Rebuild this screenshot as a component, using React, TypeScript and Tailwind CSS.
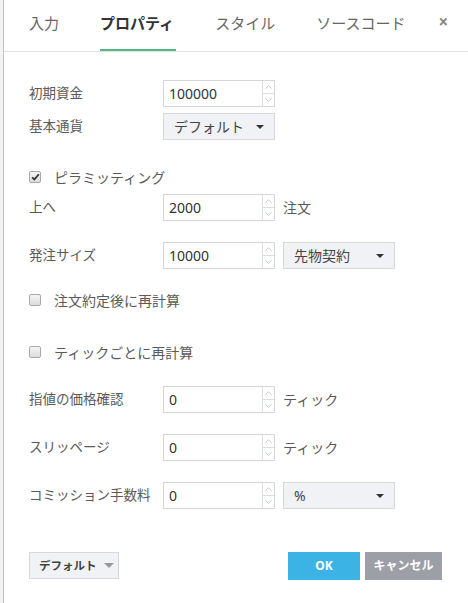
import React from "react";

const font = { fontFamily: "'Noto Sans','Noto Sans CJK JP',sans-serif" };

function Spin() {
  return (
    <div className="flex w-[12px] flex-col border-l border-[#dedede]">
      <div className="flex flex-1 items-center justify-center border-b border-[#dedede]">
        <svg width="7" height="4" viewBox="0 0 7 4"><path d="M0.5 3.5 L3.5 0.8 L6.5 3.5" fill="none" stroke="#b8c2cf" strokeWidth="0.9" /></svg>
      </div>
      <div className="flex flex-1 items-center justify-center">
        <svg width="7" height="4" viewBox="0 0 7 4"><path d="M0.5 0.5 L3.5 3.2 L6.5 0.5" fill="none" stroke="#b8c2cf" strokeWidth="0.9" /></svg>
      </div>
    </div>
  );
}

function NumInput({ value }: { value: string }) {
  return (
    <div className="flex h-[27px] w-[112px] border border-[#d6d6d6] bg-white">
      <div className="flex flex-1 items-center pl-[5px] text-[14px] text-[#333]">{value}</div>
      <Spin />
    </div>
  );
}

function Caret({ color = "#333", w = 8 }: { color?: string; w?: number }) {
  return (
    <svg width={w} height={w / 2} viewBox="0 0 8 4"><path d="M0 0 L8 0 L4 4 Z" fill={color} /></svg>
  );
}

function Select({ label }: { label: string }) {
  return (
    <div className="flex h-[27px] w-[112px] items-center justify-between border border-[#d8d8d8] bg-[#f1f2f6] pl-[10px] pr-[10px] text-[14px] text-[#444]">
      <span>{label}</span>
      <Caret />
    </div>
  );
}

function Check({ checked, label }: { checked?: boolean; label: string }) {
  return (
    <div className="flex h-[20px] items-center">
      <span className="flex h-[12px] w-[12px] items-center justify-center rounded-[2px] border border-[#a9a9a9] bg-gradient-to-b from-[#f4f4f4] to-[#dcdcdc]">
        {checked && (
          <svg width="9" height="8" viewBox="0 0 9 8"><path d="M1.2 4.3 L3.4 6.5 L7.8 1.2" fill="none" stroke="#333" strokeWidth="1.8" /></svg>
        )}
      </span>
      <span className="ml-[13px] text-[14px] text-[#5a5a5a]">{label}</span>
    </div>
  );
}

function Row({ label, children, mt }: { label: string; children: React.ReactNode; mt: string }) {
  return (
    <div className={`flex h-[27px] items-center ${mt}`}>
      <div className="w-[134px] whitespace-nowrap text-[13.5px] text-[#5a5a5a]">{label}</div>
      {children}
    </div>
  );
}

export default function App() {
  return (
    <div className="flex h-[603px] w-[468px] bg-white" style={font}>
      <div className="w-[4px] border-r border-[#c4c4c4] bg-[#f2f2f2]" />
      <div className="flex flex-1 flex-col">
        <div className="relative flex h-[52px] items-end border-b border-[#e2e2e2]">
          <div className="flex h-full w-full items-start pt-[12px] text-[15px] text-[#666]">
            <div className="ml-[25px]">入力</div>
            <div className="relative ml-[41px] h-[40px] font-bold text-[#333]">
              プロパティ
              <div className="absolute left-0 right-[-2px] top-[37px] h-[2px] bg-[#52b783]" />
            </div>
            <div className="ml-[41px]">スタイル</div>
            <div className="ml-[41px]">ソースコード</div>
            <div className="ml-[33px] text-[17px] font-bold leading-[20px] text-[#888]">×</div>
          </div>
        </div>
        <div className="flex flex-col pl-[25px]">
          <Row label="初期資金" mt="mt-[28px]"><NumInput value="100000" /></Row>
          <Row label="基本通貨" mt="mt-[6px]"><Select label="デフォルト" /></Row>
          <div className="mt-[27px]"><Check checked label="ピラミッティング" /></div>
          <Row label="上へ" mt="mt-[7px]">
            <NumInput value="2000" />
            <span className="ml-[8px] text-[14px] text-[#5a5a5a]">注文</span>
          </Row>
          <Row label="発注サイズ" mt="mt-[21px]">
            <NumInput value="10000" />
            <div className="ml-[8px]"><Select label="先物契約" /></div>
          </Row>
          <div className="mt-[21px]"><Check label="注文約定後に再計算" /></div>
          <div className="mt-[32px]"><Check label="ティックごとに再計算" /></div>
          <Row label="指値の価格確認" mt="mt-[24px]">
            <NumInput value="0" />
            <span className="ml-[8px] text-[14px] text-[#5a5a5a]">ティック</span>
          </Row>
          <Row label="スリッページ" mt="mt-[21px]">
            <NumInput value="0" />
            <span className="ml-[8px] text-[14px] text-[#5a5a5a]">ティック</span>
          </Row>
          <Row label="コミッション手数料" mt="mt-[21px]">
            <NumInput value="0" />
            <div className="ml-[8px]"><Select label="%" /></div>
          </Row>
          <div className="mt-[43px] flex h-[27px] items-center">
            <div className="flex h-[27px] w-[90px] items-center border border-[#d8d8d8] bg-[#f1f2f6] pl-[9px] text-[11.5px] font-bold text-[#444]">
              <span>デフォルト</span>
              <span className="ml-[7px] flex"><Caret color="#999" w={10} /></span>
            </div>
            <div className="ml-[169px] flex h-[28px] w-[72px] items-center justify-center bg-[#3bb4e5] text-[12px] font-bold text-white">OK</div>
            <div className="ml-[5px] flex h-[28px] w-[77px] items-center justify-center bg-[#9d9fa7] text-[12px] font-bold text-white">キャンセル</div>
          </div>
        </div>
      </div>
    </div>
  );
}
